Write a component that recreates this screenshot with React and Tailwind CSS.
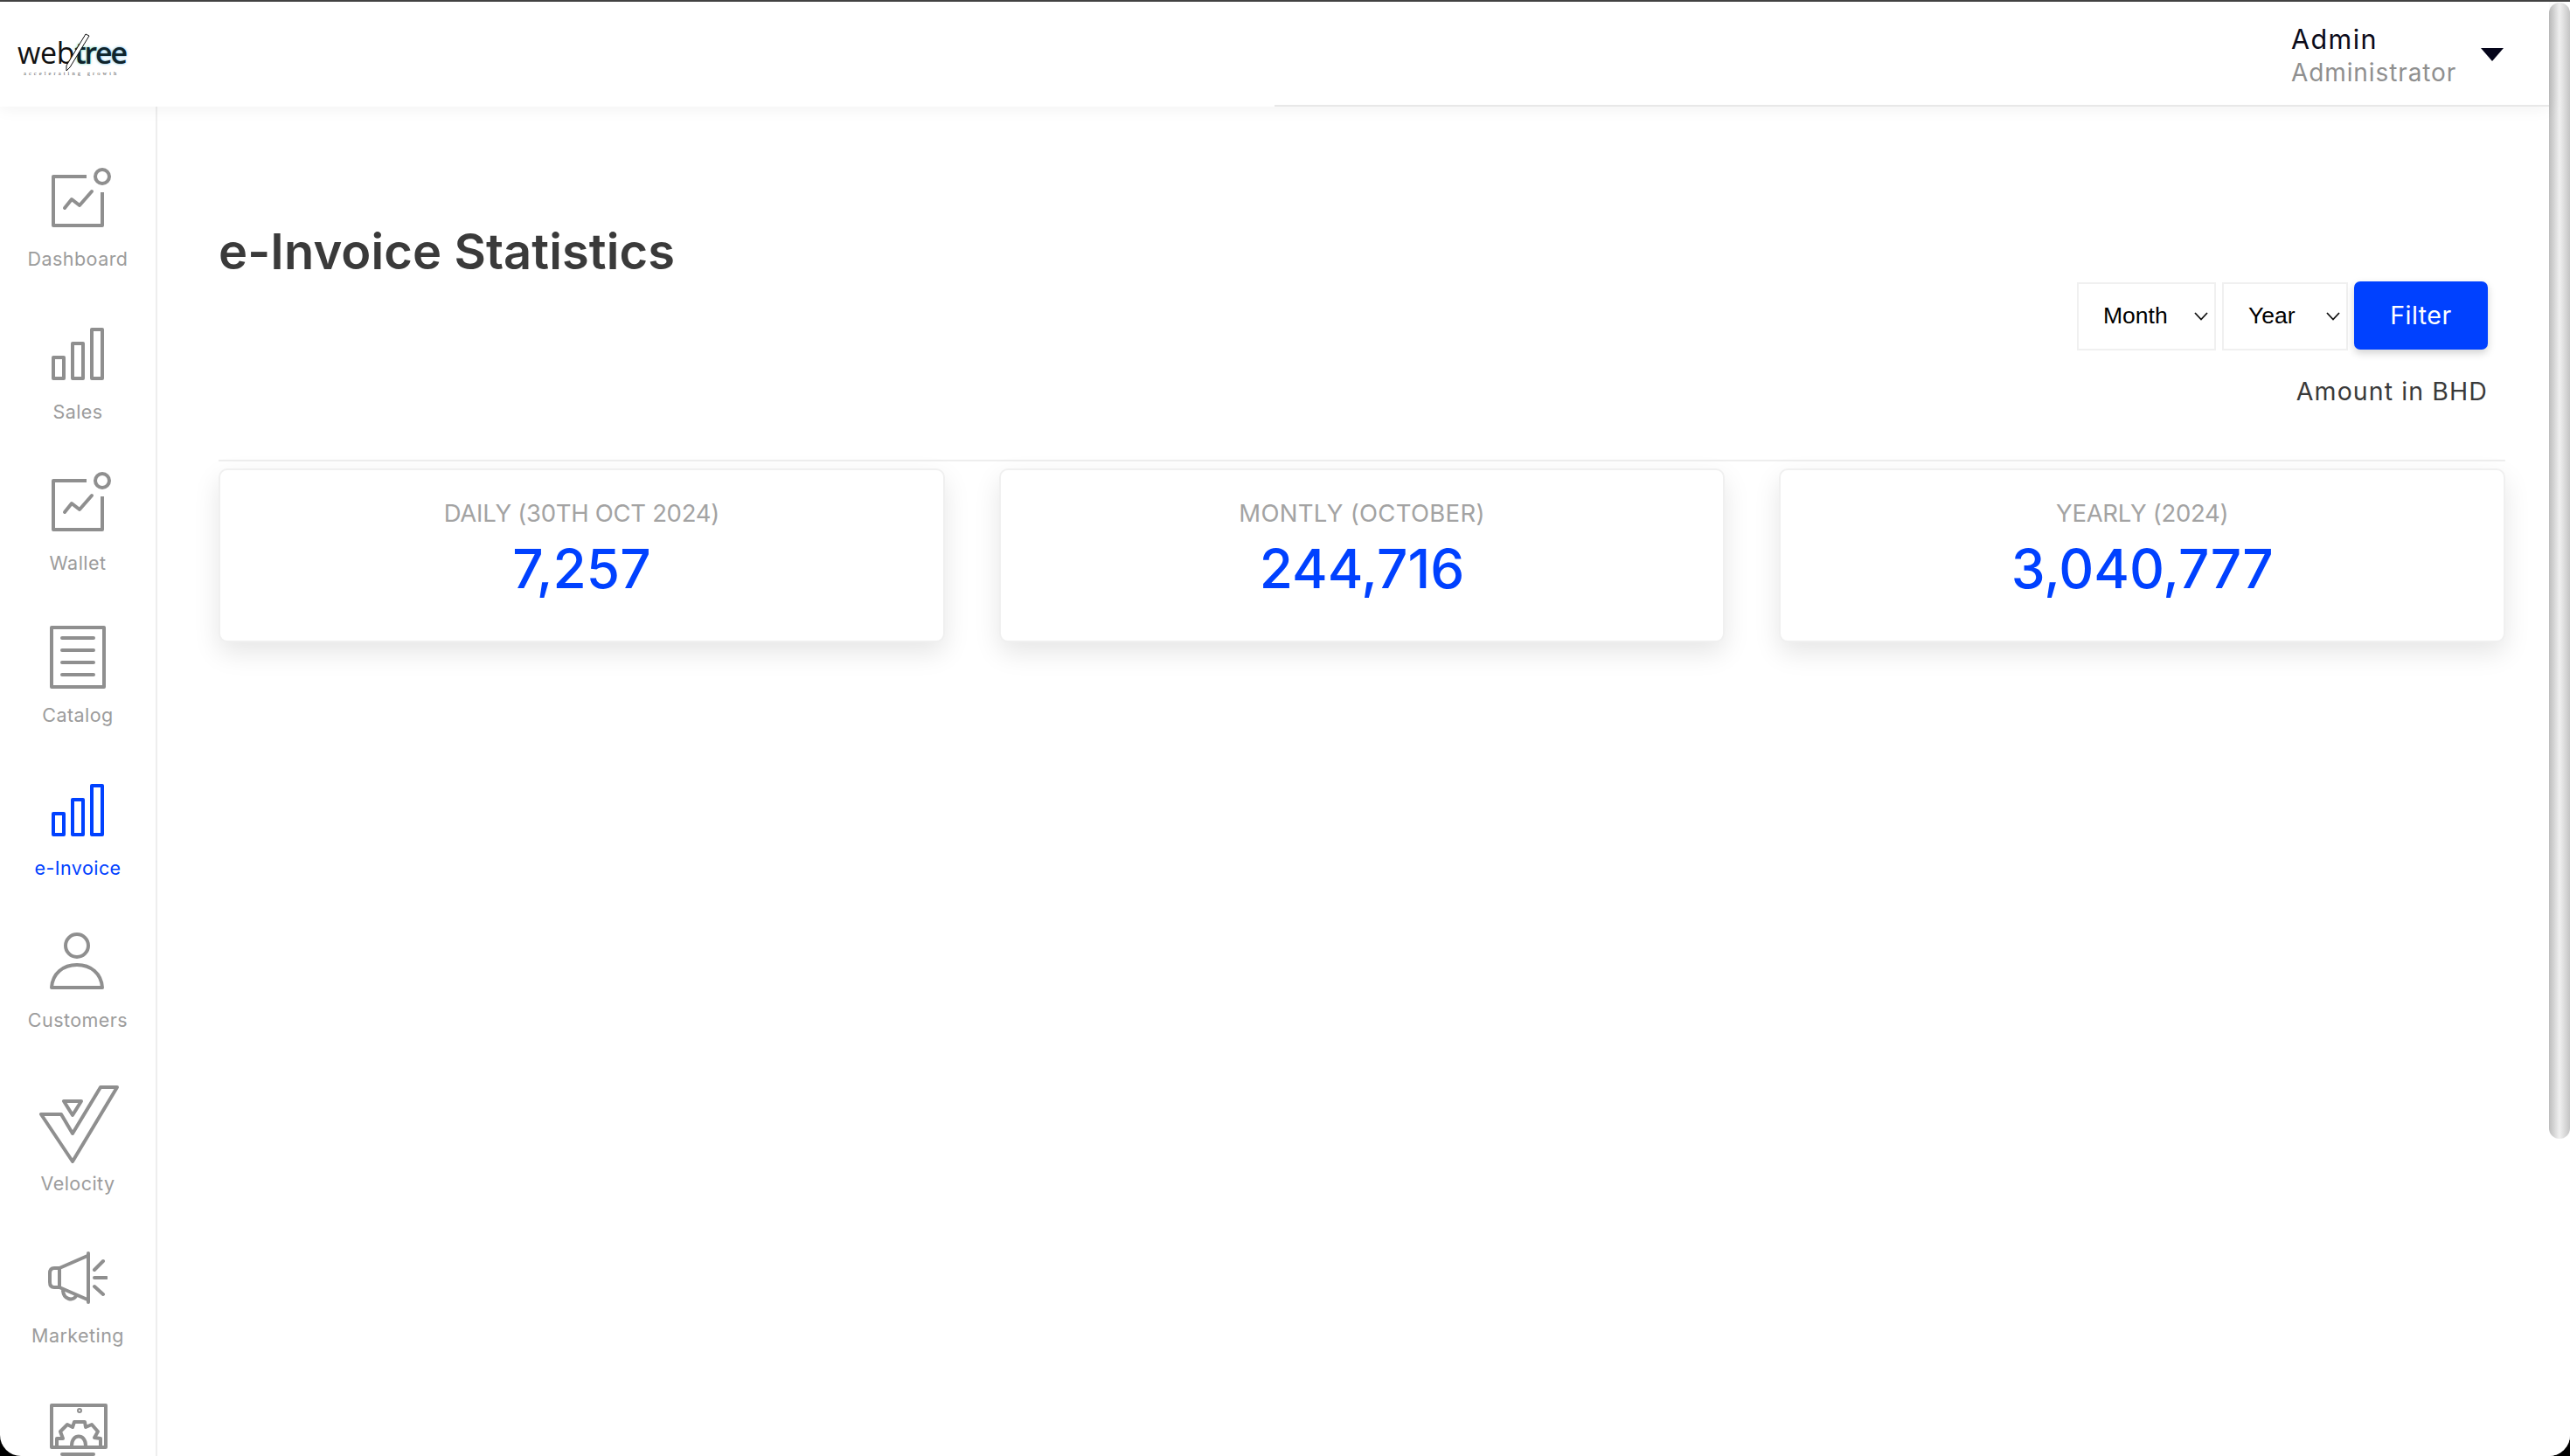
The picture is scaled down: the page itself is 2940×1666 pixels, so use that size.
import React from "react";

function IconChart({ c }) {
  return (
    <svg width="76" height="68" viewBox="0 0 76 68" fill="none" stroke={c} strokeWidth="4" strokeLinejoin="round">
      <path d="M48 10 H10 V66 H66 V28" />
      <circle cx="66" cy="10" r="8" />
      <path d="M23 46 L31 36 L40 43 L54 27" strokeLinecap="round" />
    </svg>
  );
}
function IconBars({ c }) {
  return (
    <svg width="60" height="60" viewBox="0 0 60 60" fill="none" stroke={c} strokeWidth="4" strokeLinejoin="round">
      <rect x="2" y="34" width="12" height="24" />
      <rect x="24" y="18" width="12" height="40" />
      <rect x="46" y="2" width="12" height="56" />
    </svg>
  );
}
function IconCatalog({ c }) {
  return (
    <svg width="64" height="72" viewBox="0 0 64 72" fill="none" stroke={c} strokeWidth="4" strokeLinejoin="round" strokeLinecap="round">
      <rect x="2" y="2" width="60" height="68" />
      <path d="M14 14 H50 M14 28 H50 M14 42 H50 M14 56 H50" />
    </svg>
  );
}
function IconUser({ c }) {
  return (
    <svg width="64" height="65" viewBox="0 0 64 65" fill="none" stroke={c} strokeWidth="4" strokeLinejoin="round">
      <circle cx="31" cy="15" r="13" />
      <path d="M2 63 C3 47 15 37 31 37 C47 37 59 47 60 63 Z" />
    </svg>
  );
}
function IconVelocity({ c }) {
  return (
    <svg className="ml-[2px]" width="92" height="90" viewBox="0 0 92 90" fill="none" stroke={c} strokeWidth="4" strokeLinejoin="round">
      <path d="M3 34 H26 L39 56 L71 3 H90 L39 88 Z" />
      <path d="M29 19 H49 L39 35 Z" />
    </svg>
  );
}
function IconMegaphone({ c }) {
  return (
    <svg width="68" height="60" viewBox="0 0 68 60" fill="none" stroke={c} strokeWidth="4" strokeLinejoin="round" strokeLinecap="round">
      <path d="M46 2 V58" />
      <path d="M45 5 L13 19 H7 C3 19 2 22 2 25 V35 C2 38 3 41 7 41 H13 L45 55" />
      <path d="M13 19 V41" />
      <path d="M17 45 C18 55 28 57 32 51" />
      <path d="M53 21 L63 11 M53 30 H67 M53 40 L63 49" />
    </svg>
  );
}
function IconGear({ c }) {
  return (
    <svg className="ml-[2px]" width="66" height="62" viewBox="0 0 66 62" fill="none" stroke={c} strokeWidth="4" strokeLinejoin="round" strokeLinecap="round">
      <rect x="2" y="2" width="62" height="48" />
      <circle cx="34" cy="8" r="1" />
      <path d="M8 48 V40 H15 L12 32 L20 24 L26 27 L28 21 H40 L41 27 L48 24 L55 32 L51 39 L58 40 V48" />
      <path d="M25 48 C25 34 41 34 41 48" />
      <path d="M14 58 H50" />
    </svg>
  );
}

function NavItem({ icon, label, active, box = "h-[174px]", slot = "pb-[22px]" }) {
  return (
    <div className={`flex flex-col items-center shrink-0 ${box}`}>
      <div className={`flex flex-1 items-end justify-center ${slot}`}>{icon}</div>
      <span className={`shrink-0 text-[21.5px] leading-[28px] tracking-[0.45px] ${active ? "text-[#0041ff]" : "text-[#9c9c9c]"}`}>
        {label}
      </span>
    </div>
  );
}

function Select({ label, box, pl }) {
  return (
    <div className={`${box} ${pl} mt-[1px] h-[78px] border-2 border-[#f0f0f0] flex items-center justify-between pr-[7px] [font-family:'Liberation_Sans',sans-serif] text-[26.5px] text-black`}>
      <span>{label}</span>
      <svg width="16" height="10" viewBox="0 0 16 10" fill="none" stroke="#111" strokeWidth="1.8"><path d="M1 1 L8 8.5 L15 1" /></svg>
    </div>
  );
}

function StatCard({ title, value, track = "tracking-[-0.3px]" }) {
  return (
    <div className="flex-1 h-[199px] bg-white border-2 border-[#f0f0f0] rounded-[10px] shadow-[0_12px_30px_rgba(0,0,0,0.1)] flex flex-col items-center pt-[31px]">
      <div className={`text-[27.5px] leading-[36px] text-[#a3a3a3] ${track}`}>{title}</div>
      <div className="mt-[8px] text-[62px] leading-[76px] font-medium text-[#0041ff]">{value}</div>
    </div>
  );
}

export default function App() {
  const g = "#8f8f8f";
  return (
    <div className="w-[2940px] h-[1666px] overflow-hidden bg-black [font-family:Inter,'Liberation_Sans',sans-serif]">
      <div className="h-full flex flex-col bg-white rounded-b-[24px] overflow-hidden">
        <div className="h-[2px] shrink-0 bg-[#444444]" />
        <div className="flex flex-1 min-h-0">
          <div className="flex-1 min-w-0 flex flex-col">
            <header className="relative z-10 h-[120px] shrink-0 flex items-center justify-between bg-white shadow-[0_2px_18px_rgba(0,0,0,0.06)] pr-[52px]">
              <div className="relative self-start ml-[20px] mt-[38px] h-[40px] leading-[40px] whitespace-nowrap [font-family:'Open_Sans',sans-serif]">
                <span className="text-[34px] tracking-[-0.3px] text-[#111]">web</span>
                <span className="text-[34px] tracking-[-2.2px] font-semibold text-[#10242c] [text-shadow:0_0_3px_#58cfb0]">tr</span>
                <span className="text-[34px] tracking-[-2.2px] font-semibold text-[#10242c] [text-shadow:0_0_3px_#5cb2e4]">ee</span>
                <svg className="absolute left-[55px] top-[-2px]" width="28" height="44" viewBox="0 0 28 44" fill="white" stroke="#111" strokeWidth="1"><path d="M23 1 L27 3 L5 39 L1 43 L1 37 Z" /></svg>
                <span className="absolute left-[7px] top-[40px] text-[6.5px] leading-[8px] tracking-[3.05px] text-[#555] [font-family:'Liberation_Serif',serif]">accelerating growth</span>
              </div>
              <div className="flex items-start">
                <div className="w-[217px] mt-[3px]">
                  <div className="text-[30.5px] leading-[39px] tracking-[1.4px] text-[#0b0b1a]">Admin</div>
                  <div className="text-[28px] leading-[39px] tracking-[0.9px] text-[#8f8f8f]">Administrator</div>
                </div>
                <svg className="mt-[33px]" width="26" height="15" viewBox="0 0 26 15" fill="#05051a"><path d="M0 0 H26 L13 15 Z" /></svg>
              </div>
              <div className="absolute left-[1458px] right-0 bottom-0 h-[2px] bg-[#e8e8e8]" />
            </header>

            <div className="flex flex-1 min-h-0">
              <aside className="w-[180px] shrink-0 border-r-2 border-[#eeeeee] overflow-hidden flex flex-col pt-[14px]">
                <NavItem icon={<IconChart c={g} />} label="Dashboard" />
                <NavItem icon={<IconBars c={g} />} label="Sales" box="h-[175px]" />
                <NavItem icon={<IconChart c={g} />} label="Wallet" box="h-[173px]" />
                <NavItem icon={<IconCatalog c={g} />} label="Catalog" slot="pb-[16px]" />
                <NavItem icon={<IconBars c="#0041ff" />} label="e-Invoice" active box="h-[175px]" />
                <NavItem icon={<IconUser c={g} />} label="Customers" slot="pb-[21px]" />
                <NavItem icon={<IconVelocity c={g} />} label="Velocity" box="h-[187px]" slot="pb-[9px]" />
                <NavItem icon={<IconMegaphone c={g} />} label="Marketing" />
                <div className="flex justify-center shrink-0 pt-[64px]"><IconGear c={g} /></div>
              </aside>

              <main className="flex-1 min-w-0 pl-[70px] pr-[50px]">
                <h1 className="mt-[133px] text-[56px] leading-[67px] tracking-[0.1px] font-semibold text-[#3a3a3a]">e-Invoice Statistics</h1>
                <div className="flex justify-end items-start gap-[7px] pr-[20px]">
                  <Select label="Month" box="w-[159px]" pl="pl-[28px]" />
                  <Select label="Year" box="w-[144px]" pl="pl-[28px]" />
                  <button className="w-[153px] h-[78px] rounded-[7px] bg-[#0041ff] text-white text-[28.5px] tracking-[0.5px] shadow-[0_4px_10px_rgba(0,0,0,0.18)]">Filter</button>
                </div>
                <div className="pr-[20px] mt-[27px] text-right text-[28.5px] leading-[40px] tracking-[1.1px] text-[#3a3a3a]">Amount in BHD</div>
                <div className="mt-[58px] h-[2px] bg-[#eeeeee]" />
                <div className="flex gap-[62px] mt-[8px]">
                  <StatCard title="DAILY (30TH OCT 2024)" value="7,257" />
                  <StatCard title="MONTLY (OCTOBER)" value="244,716" track="tracking-[0.3px]" />
                  <StatCard title="YEARLY (2024)" value="3,040,777" />
                </div>
              </main>
            </div>
          </div>

          <div className="w-[24px] shrink-0 bg-white">
            <div className="mt-[1px] h-[1300px] rounded-full bg-[linear-gradient(90deg,#bdbdbd,#f0f0f0_50%,#c4c4c4)]" />
          </div>
        </div>
      </div>
    </div>
  );
}
